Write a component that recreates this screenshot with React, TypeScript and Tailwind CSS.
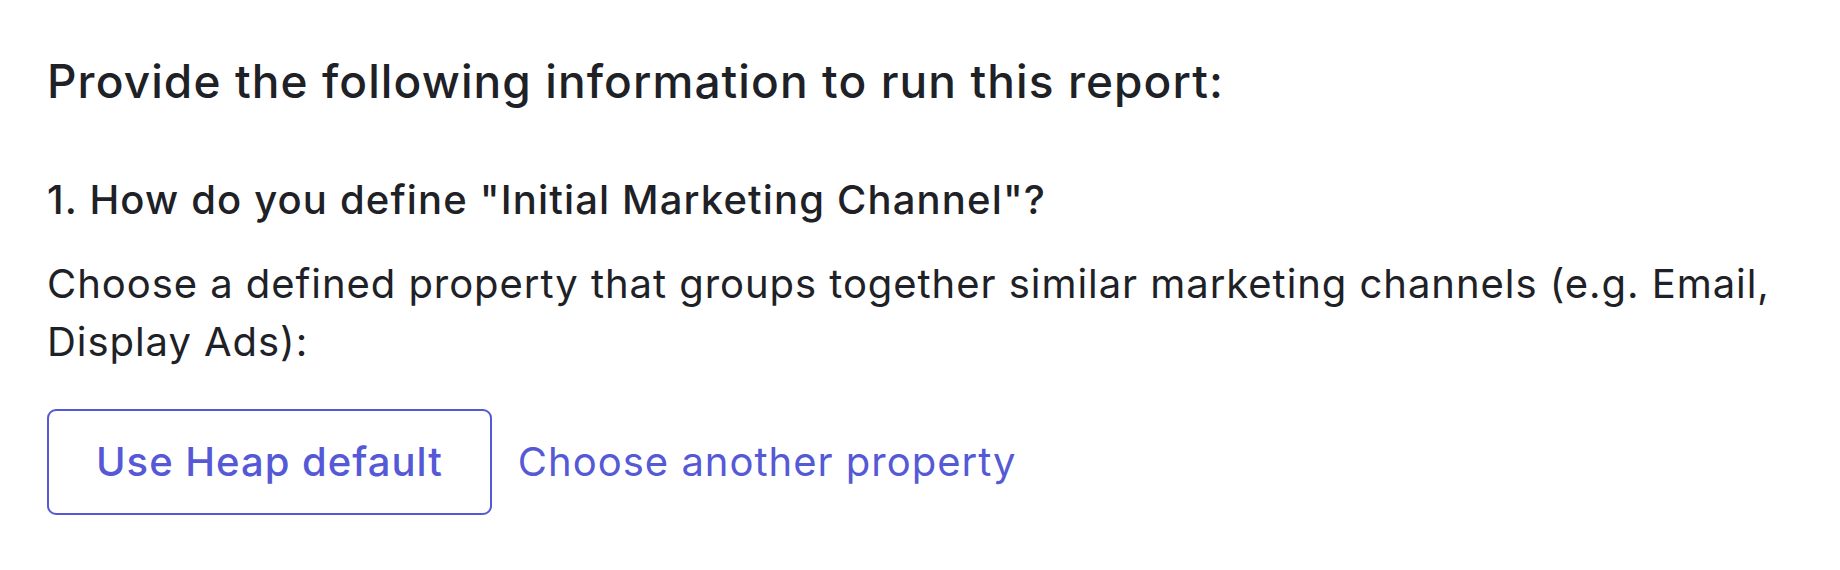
export default function App() {
  return (
    <div className="min-h-[570px] bg-white px-[47px] pt-[53px] font-['Inter',sans-serif] text-[#1e2126] antialiased">
      <h2 className="text-[46px] font-medium leading-[56px] tracking-[1.1px]">
        Provide the following information to run this report:
      </h2>

      <div className="mt-[62px]">
        <h3 className="text-[40px] font-medium leading-[58px] tracking-[1.15px]">
          1. How do you define "Initial Marketing Channel"?
        </h3>
        <p className="mt-[26px] text-[40px] leading-[58px] tracking-[0.95px]">
          Choose a defined property that groups together similar marketing channels (e.g. Email, Display Ads):
        </p>

        <div className="mt-[38px] flex items-center gap-[26px]">
          <button className="flex h-[106px] items-center rounded-[9px] border-2 border-[#5559d6] px-[47px] text-[40px] font-medium leading-[58px] tracking-[1px] text-[#5559d6]">
            Use Heap default
          </button>
          <button className="text-[40px] leading-[58px] tracking-[1px] text-[#5559d6]">
            Choose another property
          </button>
        </div>
      </div>
    </div>
  )
}
